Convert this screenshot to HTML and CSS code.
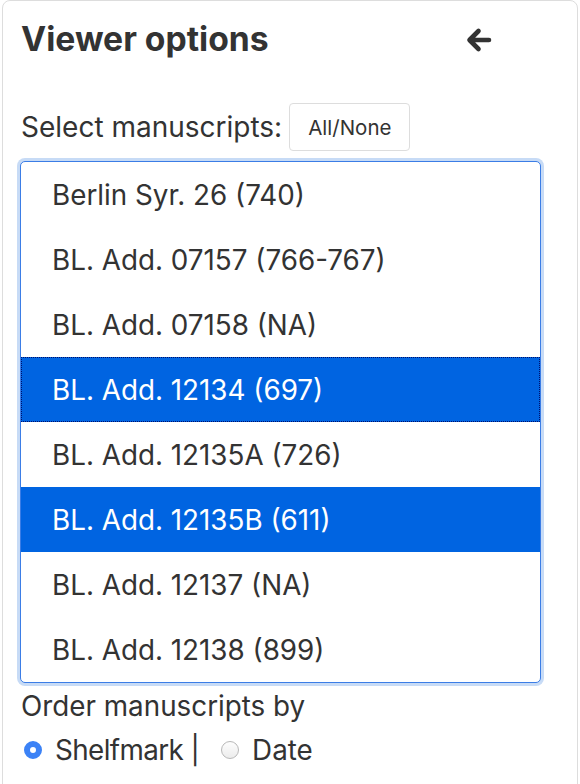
FILE: index.html
```html
<!DOCTYPE html>
<html>
<head>
<meta charset="utf-8">
<link rel="stylesheet" href="styles.css">
</head>
<body>
<div class="panel">
  <div class="header">
    <h2 class="title">Viewer options</h2>
    <span class="back" aria-label="Hide">
      <svg width="26" height="26" viewBox="0 0 26 26"><path d="M23 13H4.5M12.5 4L3.5 13L12.5 22" fill="none" stroke="#333" stroke-width="4.6" stroke-linecap="round" stroke-linejoin="round"/></svg>
    </span>
  </div>
  <div class="select-row">
    <span class="label">Select manuscripts:</span>
    <button class="btn">All/None</button>
  </div>
  <div class="listbox">
    <div class="opt">Berlin Syr. 26 (740)</div>
    <div class="opt">BL. Add. 07157 (766-767)</div>
    <div class="opt">BL. Add. 07158 (NA)</div>
    <div class="opt sel focus">BL. Add. 12134 (697)</div>
    <div class="opt">BL. Add. 12135A (726)</div>
    <div class="opt sel">BL. Add. 12135B (611)</div>
    <div class="opt">BL. Add. 12137 (NA)</div>
    <div class="opt">BL. Add. 12138 (899)</div>
  </div>
  <div class="order-label">Order manuscripts by</div>
  <div class="radios">
    <span class="radio checked"></span><span class="rlabel first">Shelfmark |</span>
    <span class="radio"></span><span class="rlabel">Date</span>
  </div>
</div>
</body>
</html>
```
FILE: styles.css
```css
html, body {
  margin: 0;
  padding: 0;
  background: #fff;
}
body {
  font-family: Inter, "Liberation Sans", sans-serif;
  color: #333;
}
.panel {
  margin-left: 2px;
  width: 538px;
  height: 800px;
  border: 1px solid #ddd;
  border-radius: 8px;
  padding: 0 19px 0 17px;
  box-sizing: content-box;
}
.header {
  display: flex;
  align-items: center;
  justify-content: space-between;
  height: 74px;
  padding-right: 66px;
}
.title {
  margin: 0;
  font-size: 33.7px;
  font-weight: 700;
  padding-left: 1px;
}
.back {
  display: flex;
  margin-top: 4px;
}
.select-row {
  display: flex;
  align-items: center;
  gap: 7px;
  height: 48px;
  margin-top: 28px;
  padding-left: 1px;
}
.label {
  font-size: 28px;
  font-weight: 400;
}
.btn {
  font-family: Inter, "Liberation Sans", sans-serif;
  font-size: 20.5px;
  color: #333;
  background: #fff;
  border: 1px solid #ddd;
  border-radius: 4px;
  height: 48px;
  padding: 0 18px;
}
.listbox {
  margin-top: 10px;
  width: 519px;
  border: 1px solid #3b7de6;
  border-radius: 5px;
  box-shadow: 0 0 0 3px #c7dbf6;
  overflow: hidden;
  background: #fff;
}
.opt {
  height: 65px;
  display: flex;
  align-items: center;
  padding-left: 31px;
  font-size: 27.8px;
  box-sizing: border-box;
}
.opt.sel {
  background: #0064e1;
  color: #fff;
}
.opt.focus {
  border: 1px dotted #00106b;
  padding-left: 30px;
}
.order-label {
  font-size: 27.8px;
  margin-top: 6px;
  padding-left: 1px;
  line-height: 34px;
}
.radios {
  display: flex;
  align-items: center;
  height: 42px;
  margin-top: 6px;
  padding-left: 4px;
  font-size: 27.8px;
}
.radio {
  width: 18px;
  height: 18px;
  border-radius: 50%;
  box-sizing: border-box;
  border: 1px solid #b8b8b8;
  background: linear-gradient(#fdfdfd, #ececec);
  margin-right: 13px;
}
.radio.checked {
  border: 6px solid #3b82f6;
  background: #fff;
}
.rlabel.first {
  letter-spacing: -0.6px;
  margin-right: 22px;
}
```
